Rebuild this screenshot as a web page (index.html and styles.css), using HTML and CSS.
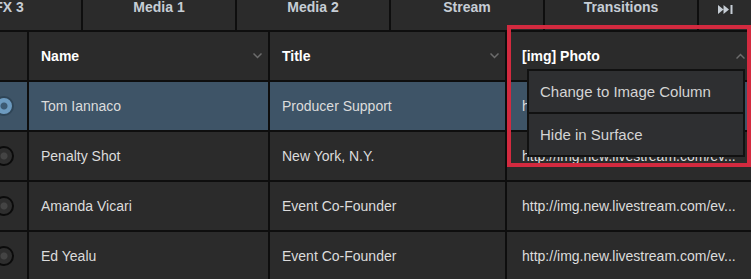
FILE: index.html
```html
<!DOCTYPE html>
<html lang="en">
<head>
  <meta charset="UTF-8" />
  <title>Data Surface</title>
  <link rel="stylesheet" href="styles.css">
</head>
<body>
  <div class="tabs">
    <div class="tab tab-first">FX 3</div>
    <div class="tab">Media 1</div>
    <div class="tab">Media 2</div>
    <div class="tab">Stream</div>
    <div class="tab">Transitions</div>
    <div class="tab tab-end">
      <svg width="15" height="9" viewBox="0 0 15 9">
        <path d="M0 0 L5.5 4.5 L0 9 Z M5.5 0 L11 4.5 L5.5 9 Z" fill="#c6cdd5" />
        <rect x="12.5" y="0" width="2" height="9" fill="#c6cdd5" />
      </svg>
    </div>
  </div>

  <div class="grid">
    <div class="cell head"></div>
    <div class="cell head"><span>Name</span><svg class="chev" width="9" height="6" viewBox="0 0 9 6"><path d="M0.5 0.5 L4.5 4.5 L8.5 0.5" /></svg></div>
    <div class="cell head"><span>Title</span><svg class="chev" width="9" height="6" viewBox="0 0 9 6"><path d="M0.5 0.5 L4.5 4.5 L8.5 0.5" /></svg></div>
    <div class="cell head photo"><span>[img] Photo</span><svg class="chev" width="9" height="6" viewBox="0 0 9 6"><path d="M0.5 5.5 L4.5 1.5 L8.5 5.5" /></svg></div>

    <div class="cell sel"><span class="radio on"></span></div>
    <div class="cell sel">Tom Iannaco</div>
    <div class="cell sel">Producer Support</div>
    <div class="cell sel photo">http://img.new.livestream.com/ev...</div>

    <div class="cell"><span class="radio"></span></div>
    <div class="cell">Penalty Shot</div>
    <div class="cell">New York, N.Y.</div>
    <div class="cell photo">http://img.new.livestream.com/ev...</div>

    <div class="cell"><span class="radio"></span></div>
    <div class="cell">Amanda Vicari</div>
    <div class="cell">Event Co-Founder</div>
    <div class="cell photo">http://img.new.livestream.com/ev...</div>

    <div class="cell"><span class="radio"></span></div>
    <div class="cell">Ed Yealu</div>
    <div class="cell">Event Co-Founder</div>
    <div class="cell photo">http://img.new.livestream.com/ev...</div>
  </div>

  <div class="callout"></div>
  <div class="menu">
    <div class="menu-item">Change to Image Column</div>
    <div class="menu-item">Hide in Surface</div>
  </div>
</body>
</html>
```

FILE: styles.css
```css
body {
  margin: 0;
  background: #0e0e0e;
  font-family: "Liberation Sans", Arial, sans-serif;
  overflow: hidden;
  position: relative;
}
.tabs {
  display: flex;
  height: 30px;
  margin-left: -63px;
  border-bottom: 2px solid #0e0e0e;
}
.tab {
  flex: none;
  width: 152px;
  height: 30px;
  border-right: 2px solid #0e0e0e;
  background: #2b2b2b;
  color: #c6cdd5;
  font-weight: bold;
  font-size: 14px;
  line-height: 14px;
  text-align: center;
}
.tab-first {
  width: 144px;
}
.tab-end {
  text-align: left;
  padding-left: 19px;
  padding-top: 2px;
  box-sizing: border-box;
}
.grid {
  display: grid;
  grid-template-columns: 27px 239px 235px 1fr;
  grid-auto-rows: 48px;
  gap: 2px;
  background: #0e0e0e;
}
.cell {
  background: #2b2b2b;
  color: #dcdcdc;
  font-size: 14px;
  line-height: 48px;
  padding: 0 6px 0 12px;
  white-space: nowrap;
  overflow: hidden;
}
.cell.photo {
  padding-left: 15px;
}
.cell.sel {
  background: #3e5467;
}
.head {
  display: flex;
  align-items: center;
  justify-content: space-between;
  color: #fff;
  font-weight: bold;
}
.chev {
  fill: none;
  stroke: #6c6c6c;
  stroke-width: 1.5;
}
.radio {
  display: block;
  width: 20px;
  height: 20px;
  margin: 14px 0 0 -18px;
  box-sizing: border-box;
  border-radius: 50%;
  border: 2px solid #0b0b0b;
  background: radial-gradient(circle, #444 0 3px, #2e2e2e 4px);
}
.radio.on {
  border-color: #2f4557;
  background: radial-gradient(circle, #3d5b74 0 3px, #6d9bc0 4px);
}
.callout {
  position: absolute;
  left: 507px;
  top: 25px;
  width: 244px;
  height: 142px;
  box-sizing: border-box;
  border: 4px solid #d32a3f;
}
.menu {
  position: absolute;
  left: 527px;
  top: 69px;
  width: 218px;
  box-sizing: border-box;
  border: 2px solid #111;
  background: #111;
}
.menu-item {
  height: 41px;
  line-height: 41px;
  padding-left: 11px;
  background: #2e2f31;
  color: #d4d4d4;
  font-size: 15px;
}
.menu-item + .menu-item {
  margin-top: 2px;
}
```
